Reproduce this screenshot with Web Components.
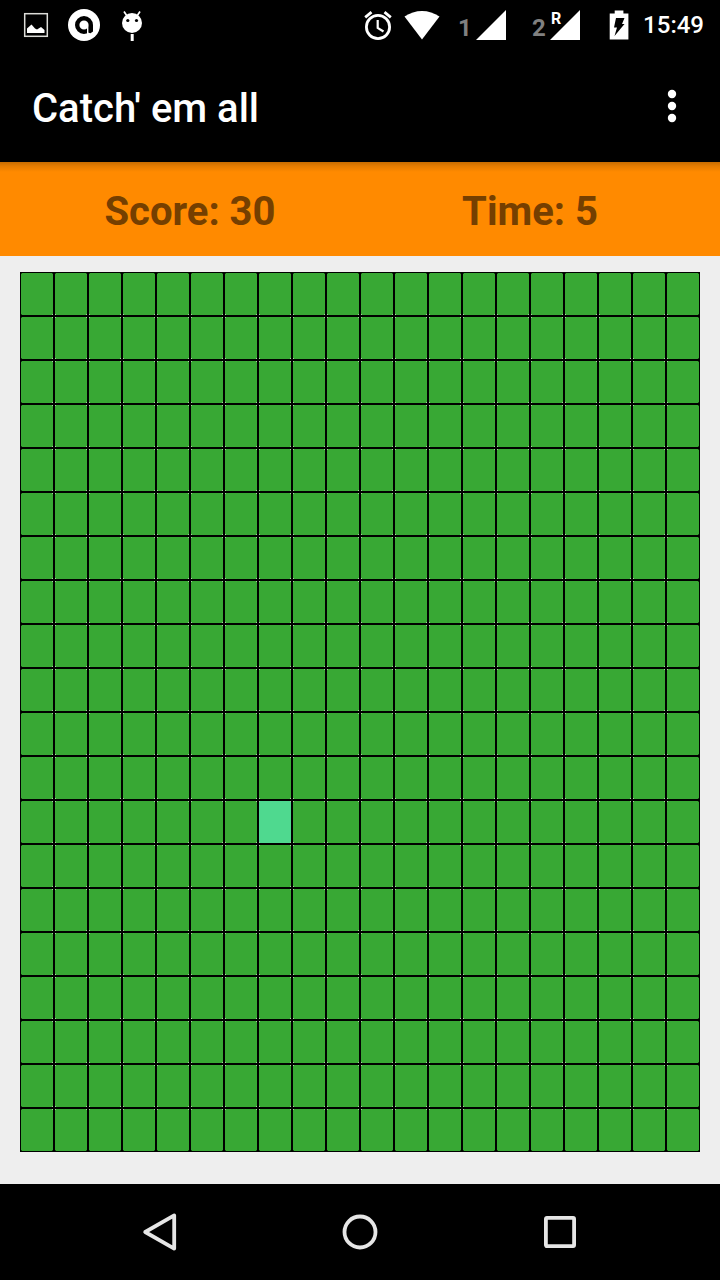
<!DOCTYPE html>
<html lang="en">
<head>
<meta charset="utf-8">
<meta name="viewport" content="width=device-width, initial-scale=1">
<title>Catch' em all</title>
<style>
html, body { margin: 0; background: #eee; }
body { font-family: Roboto, "Noto Sans", sans-serif; }
</style>
</head>
<body>
<catch-app></catch-app>

<template id="status-bar">
<style>
:host { display: flex; justify-content: space-between; align-items: center; height: 50px; padding: 0 16px 0 20px; background: #000; color: #fff; }
svg { display: block; }
.left { display: flex; gap: 16px; }
.right { display: flex; align-items: center; }
.alarm { margin-right: 10px; }
.wifi { margin-right: 18px; }
.battery { margin: 0 14px 0 29px; }
time { font-size: 24px; line-height: 32px; font-weight: 500; }
</style>
<div class="left">
  <svg width="32" height="32" viewBox="0 0 32 32" role="img" aria-label="Picture saved"><rect x="4.700" y="4.700" width="22.600" height="22.600" fill="none" stroke="#dcdcd8" stroke-width="1.500"/><path fill="#fff" d="M7 24v-4.500l4.500-4 3.500 4 2 1 4-2.500 3.500 3V24z"/></svg>
  <svg width="32" height="32" viewBox="0 0 32 32" role="img" aria-label="Avast"><circle cx="16" cy="16" r="16" fill="#fff"/><circle cx="16" cy="16" r="6.800" fill="none" stroke="#000" stroke-width="4.400"/><path d="M20.500 16H25v6.500L22.500 24.300l-2-.5z"/><path stroke="#fff" stroke-width="1.400" d="M19.700 16v9.500"/></svg>
  <svg width="32" height="32" viewBox="0 0 32 32" role="img" aria-label="Android"><circle cx="16" cy="14" r="10" fill="#fff"/><path d="M11 7L8 2.500M21 7l3-4.500" stroke="#fff" stroke-width="1.700"/><circle cx="11.800" cy="11.500" r="1.600"/><circle cx="20.500" cy="11.500" r="1.600"/><path fill="#fff" d="M14.700 25h3v7.500h-3z"/></svg>
</div>
<div class="right">
  <svg class="alarm" width="32" height="32" viewBox="0 0 32 32" role="img" aria-label="Alarm"><g fill="none" stroke="#fff"><circle cx="16" cy="18" r="11.600" stroke-width="2.800"/><path stroke-width="2.200" d="M15.700 11v8l5.800 3.500"/><path stroke-width="2.800" d="M3.200 8.300l6.300-5.200M28.800 8.300l-6.300-5.200"/></g></svg>
  <svg class="wifi" width="36" height="30" viewBox="0 0 36 30" role="img" aria-label="Wi-Fi"><path fill="#fff" d="M18 29.500L.5 6.500C11-1 25-1 35.500 6.500z"/></svg>
  <signal-meter slot-number="1"></signal-meter>
  <signal-meter slot-number="2" second>R</signal-meter>
  <svg class="battery" width="20" height="32" viewBox="0 0 20 32" role="img" aria-label="Charging"><path fill="#fff" d="M.7 4.500h5V1.500h8.700v3h5v26H.7z"/><path d="M7 9h8.500l-2.500 6h2.500L5.500 27l2.500-8.500H5z"/></svg>
  <time>15:49</time>
</div>
</template>

<template id="signal-meter">
<style>
:host { display: flex; align-items: flex-end; height: 30px; }
:host([second]) { margin-left: 26px; }
span { width: 18px; font-size: 24px; line-height: 24px; font-weight: 700; color: #808080; }
div { position: relative; }
b { position: absolute; left: 1px; top: 1px; font-size: 16px; line-height: 16px; font-weight: 700; }
svg { display: block; }
</style>
<span></span><div><svg width="30" height="30" viewBox="0 0 30 30" aria-hidden="true"><path fill="#fff" d="M30 0v30H0z"/></svg><b><slot></slot></b></div>
</template>

<template id="app-bar">
<style>
:host { display: flex; align-items: center; justify-content: space-between; height: 112px; padding: 0 24px 0 32px; box-sizing: border-box; background: #000; color: #fff; }
h1 { margin: 0; padding-top: 6px; font-size: 40px; line-height: 48px; font-weight: 500; }
button { border: 0; padding: 0; width: 48px; height: 48px; background: none; color: inherit; }
svg { display: block; }
</style>
<h1><slot></slot></h1>
<button type="button" aria-label="More options"><svg width="48" height="48" viewBox="0 0 48 48" fill="#fff"><circle cx="24" cy="12" r="4.200"/><circle cx="24" cy="24" r="4.200"/><circle cx="24" cy="36" r="4.200"/></svg></button>
</template>

<template id="score-board">
<style>
:host { display: flex; align-items: center; height: 94px; padding: 0 20px; background: linear-gradient(rgba(0,0,0,.22), rgba(0,0,0,.1) 4px, transparent 10px), #ff8a00; color: #753f00; }
::slotted(*) { flex: 1; text-align: center; font-size: 40px; line-height: 48px; font-weight: 700; padding-top: 6px; }
</style>
<slot></slot>
</template>

<template id="game-board">
<style>
:host { display: grid; grid-template-columns: repeat(20, 1fr); grid-auto-rows: 44px; }
button {
  --light: #a9d3a6; --dark: #174a15;
  --tl: var(--light); --tr: var(--light); --bl: var(--light); --br: var(--light);
  min-width: 0; padding: 0; margin: 0; border: 1px solid #000; border-radius: 0;
  background:
    linear-gradient(var(--tl), var(--tl)) left top / 1px 1px no-repeat,
    linear-gradient(var(--tr), var(--tr)) right top / 1px 1px no-repeat,
    linear-gradient(var(--bl), var(--bl)) left bottom / 1px 1px no-repeat,
    linear-gradient(var(--br), var(--br)) right bottom / 1px 1px no-repeat,
    var(--fill, #38a834);
}
.target { --fill: #4fd98f; }
.first-row { --tl: var(--dark); --tr: var(--dark); }
.last-row { --bl: var(--dark); --br: var(--dark); }
.first-column { --tl: var(--dark); --bl: var(--dark); }
.last-column { --tr: var(--dark); --br: var(--dark); }
</style>
</template>

<template id="nav-bar">
<style>
:host { display: flex; height: 96px; padding: 0 60px; background: #000; }
button { flex: 1; display: flex; align-items: center; justify-content: center; border: 0; padding: 0; background: none; }
svg { display: block; fill: none; stroke: #e6e6e6; stroke-width: 3.800; stroke-linejoin: round; }
</style>
<button type="button" aria-label="Back"><svg width="40" height="40" viewBox="0 0 40 40"><path d="M5.200 20L34.200 3.400v33.200z"/></svg></button>
<button type="button" aria-label="Home"><svg width="40" height="40" viewBox="0 0 40 40"><circle cx="20" cy="20" r="15.500"/></svg></button>
<button type="button" aria-label="Overview"><svg width="40" height="40" viewBox="0 0 40 40"><rect x="5.900" y="5.900" width="28.200" height="28.200" rx="1"/></svg></button>
</template>

<template id="catch-app">
<style>
:host { display: flex; flex-direction: column; min-height: 100vh; }
main { flex: 1; padding: 16px 20px 32px; background: #eee; }
</style>
<status-bar></status-bar>
<app-bar>Catch' em all</app-bar>
<score-board><div>Score: 30</div><div>Time: 5</div></score-board>
<main><game-board></game-board></main>
<nav-bar></nav-bar>
</template>

<script>
class TemplateElement extends HTMLElement {
  constructor() {
    super();
    this.attachShadow({ mode: "open" }).append(document.getElementById(this.localName).content.cloneNode(true));
  }
}
class StatusBar extends TemplateElement {}
class AppBar extends TemplateElement {}
class ScoreBoard extends TemplateElement {}
class NavBar extends TemplateElement {}
class CatchApp extends TemplateElement {}
class SignalMeter extends TemplateElement {
  connectedCallback() {
    this.shadowRoot.querySelector("span").textContent = this.getAttribute("slot-number");
  }
}
class GameBoard extends TemplateElement {
  constructor() {
    super();
    const columns = 20, rows = 20, target = { row: 12, column: 7 };
    for (let row = 0; row < rows; row++) {
      for (let column = 0; column < columns; column++) {
        const cell = document.createElement("button");
        cell.type = "button";
        cell.setAttribute("aria-label", `Row ${row + 1}, column ${column + 1}`);
        cell.classList.toggle("target", row === target.row && column === target.column);
        cell.classList.toggle("first-row", row === 0);
        cell.classList.toggle("last-row", row === rows - 1);
        cell.classList.toggle("first-column", column === 0);
        cell.classList.toggle("last-column", column === columns - 1);
        this.shadowRoot.append(cell);
      }
    }
  }
}
customElements.define("signal-meter", SignalMeter);
customElements.define("status-bar", StatusBar);
customElements.define("app-bar", AppBar);
customElements.define("score-board", ScoreBoard);
customElements.define("game-board", GameBoard);
customElements.define("nav-bar", NavBar);
customElements.define("catch-app", CatchApp);
</script>
</body>
</html>
